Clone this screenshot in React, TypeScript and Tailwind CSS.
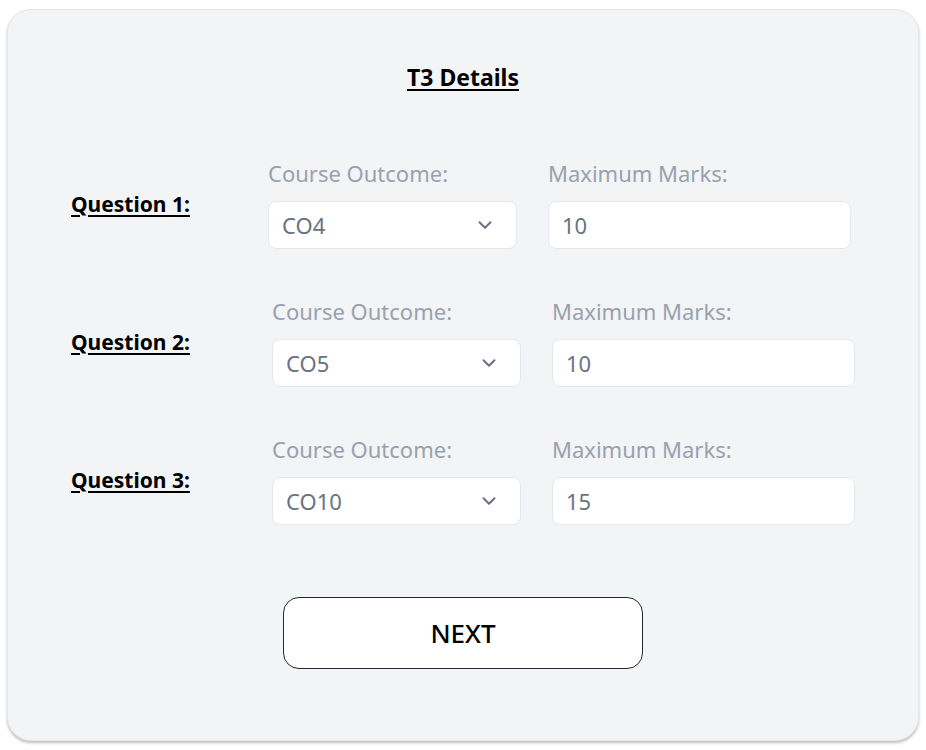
import { ChevronDown } from "lucide-react";

const questions = [
  { id: 1, outcome: "CO4", marks: "10", labelWidth: 121 },
  { id: 2, outcome: "CO5", marks: "10", labelWidth: 125 },
  { id: 3, outcome: "CO10", marks: "15", labelWidth: 125 },
];

function QuestionRow({
  id,
  outcome,
  marks,
  labelWidth,
}: {
  id: number;
  outcome: string;
  marks: string;
  labelWidth: number;
}) {
  return (
    <div className="flex items-center">
      <span
        className="shrink-0 whitespace-nowrap text-[21px] font-bold leading-7 text-black underline underline-offset-[3px] decoration-2"
        style={{ width: labelWidth }}
      >
        Question {id}:
      </span>
      <div className="ml-[76px] flex gap-[31px]">
        <div className="flex flex-col gap-[14px]">
          <span className="text-[22px] leading-7 text-gray-400">Course Outcome:</span>
          <div className="flex h-12 w-[249px] items-center justify-between rounded-lg border border-gray-200 bg-white pl-[13px] pr-[20px]">
            <span className="text-[22px] text-gray-500">{outcome}</span>
            <ChevronDown className="h-[22px] w-[22px] text-gray-500" strokeWidth={2.2} />
          </div>
        </div>
        <div className="flex flex-col gap-[14px]">
          <span className="text-[22px] leading-7 text-gray-400">Maximum Marks:</span>
          <div className="flex h-12 w-[303px] items-center rounded-lg border border-gray-200 bg-white px-[13px]">
            <span className="text-[22px] text-gray-500">{marks}</span>
          </div>
        </div>
      </div>
    </div>
  );
}

export default function App() {
  return (
    <div className="min-h-screen bg-white pl-[7px] pt-[9px]" style={{ fontFamily: '"Noto Sans", "Open Sans", sans-serif' }}>
      <div className="flex h-[732px] w-[912px] flex-col items-center rounded-3xl border border-gray-200 bg-gray-100 pt-[53px] shadow-[0_2px_3px_rgba(0,0,0,0.25)]">
        <h1 className="text-[23px] font-bold leading-7 text-black underline underline-offset-[3px] decoration-2">T3 Details</h1>
        <div className="mt-[68px] flex w-full flex-col gap-[48px] pl-[63px]">
          {questions.map((q) => (
            <QuestionRow key={q.id} {...q} />
          ))}
        </div>
        <button className="mt-[72px] flex h-[72px] w-[360px] items-center justify-center rounded-2xl border border-gray-800 bg-white text-[26px] font-medium text-black">
          NEXT
        </button>
      </div>
    </div>
  );
}
